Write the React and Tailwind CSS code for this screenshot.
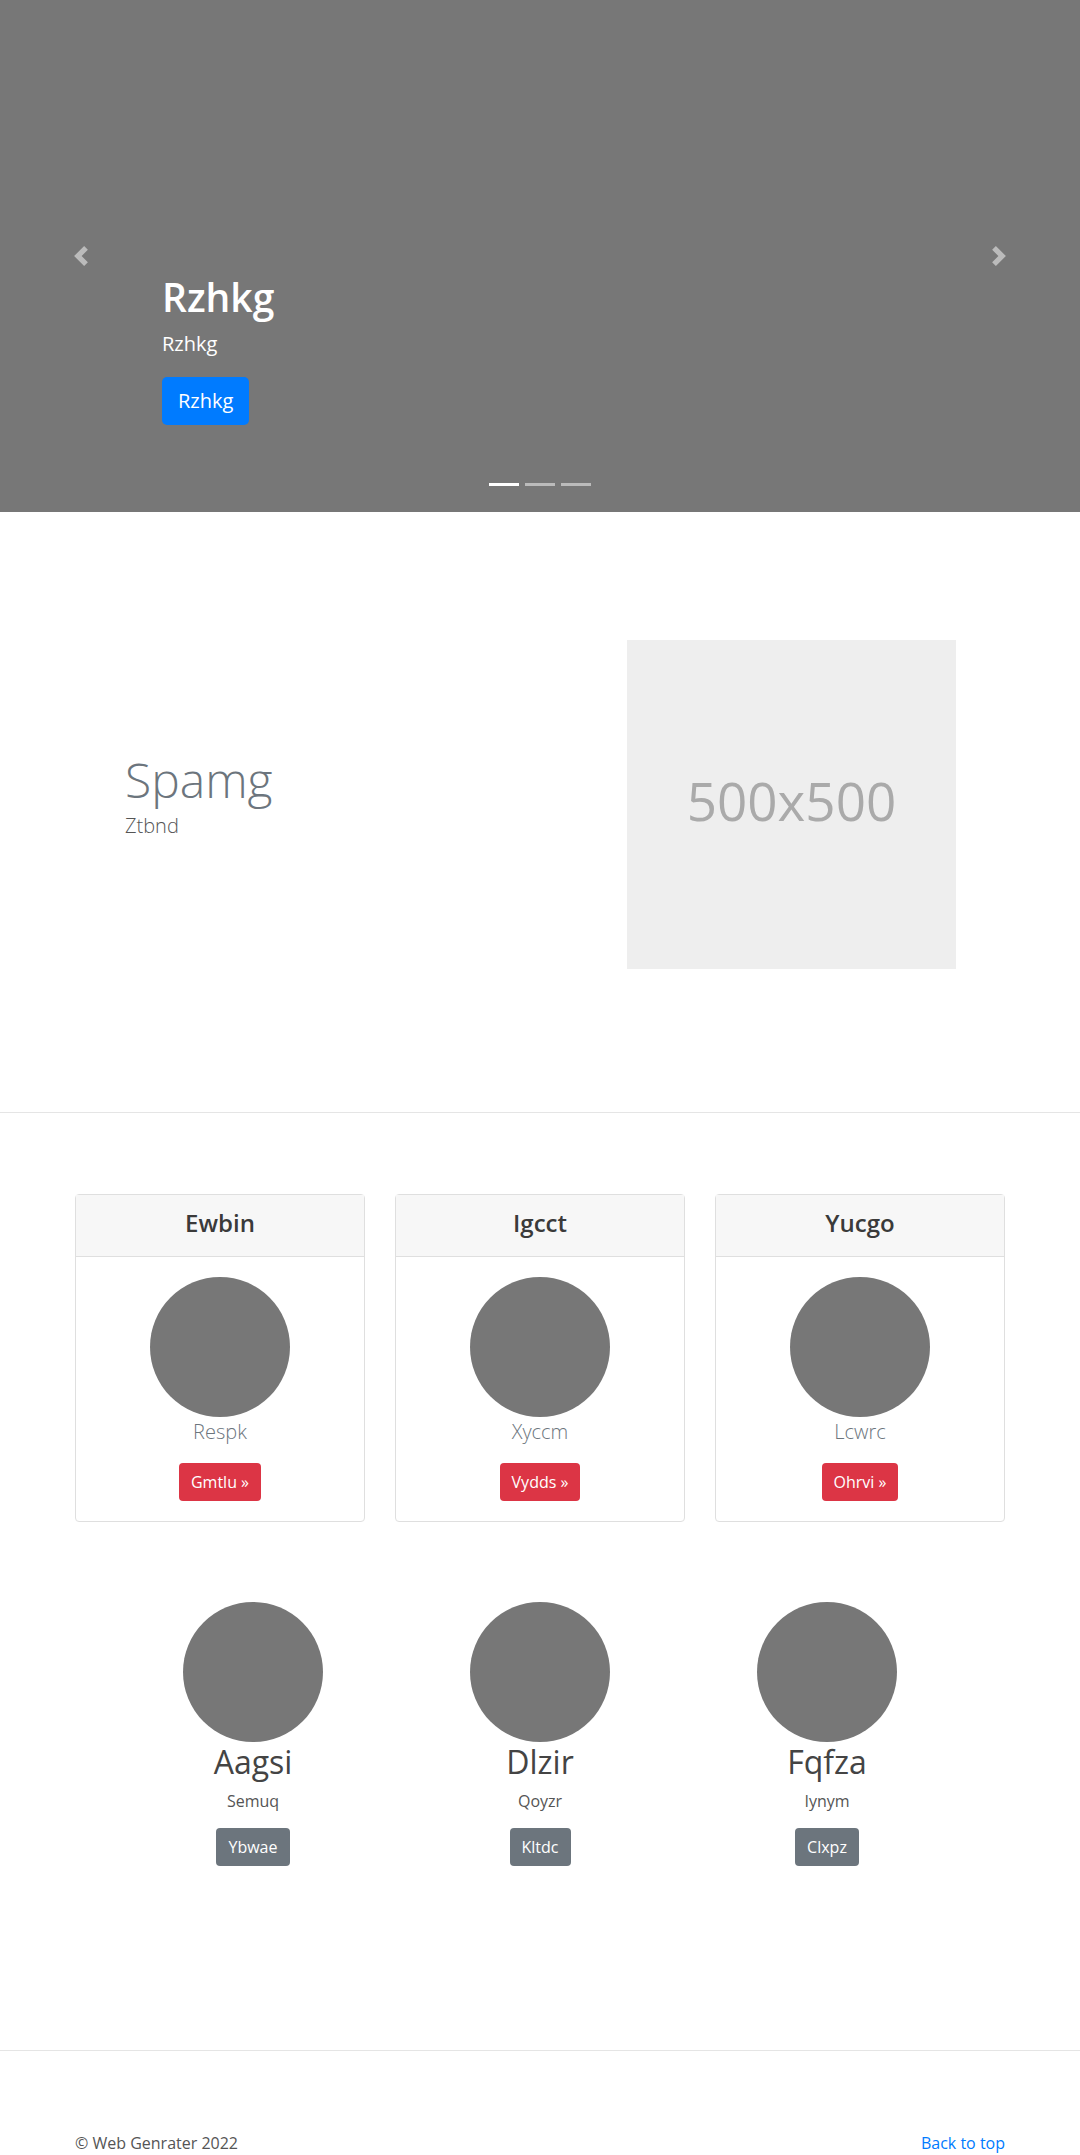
import React from 'react';

const cards = [
  { title: 'Ewbin', text: 'Respk', btn: 'Gmtlu »' },
  { title: 'Igcct', text: 'Xyccm', btn: 'Vydds »' },
  { title: 'Yucgo', text: 'Lcwrc', btn: 'Ohrvi »' },
];

const people = [
  { name: 'Aagsi', text: 'Semuq', btn: 'Ybwae' },
  { name: 'Dlzir', text: 'Qoyzr', btn: 'Kltdc' },
  { name: 'Fqfza', text: 'Iynym', btn: 'Clxpz' },
];

function Chevron({ dir }) {
  const d = dir === 'prev' ? 'M5.25 0l-4 4 4 4 1.5-1.5L4.25 4l2.5-2.5L5.25 0z' : 'M2.75 0l-1.5 1.5L3.75 4l-2.5 2.5L2.75 8l4-4-4-4z';
  return (
    <svg width="20" height="20" viewBox="0 0 8 8" className="opacity-50">
      <path fill="#fff" d={d} />
    </svg>
  );
}

export default function App() {
  return (
    <div className="w-[1080px] bg-white font-['Open_Sans','Noto_Sans',sans-serif]">
      {/* carousel */}
      <div className="relative flex h-[512px] flex-col bg-[#777] pl-[162px] pt-[273px]">
        <h1 className="mb-2 text-[39px] font-semibold leading-[48px] text-white">Rzhkg</h1>
        <p className="mb-[18px] text-[20px] leading-[30px] text-white">Rzhkg</p>
        <button className="w-fit rounded-[5px] bg-[#007bff] px-4 py-[9px] text-[20px] leading-[30px] text-white">Rzhkg</button>

        <div className="absolute left-0 top-0 flex h-full w-[162px] items-center justify-center">
          <Chevron dir="prev" />
        </div>
        <div className="absolute right-0 top-0 flex h-full w-[162px] items-center justify-center">
          <Chevron dir="next" />
        </div>
        <div className="absolute left-0 right-0 top-[483px] flex justify-center gap-[6px]">
          <span className="h-[3px] w-[30px] bg-white" />
          <span className="h-[3px] w-[30px] bg-white/50" />
          <span className="h-[3px] w-[30px] bg-white/50" />
        </div>
      </div>

      {/* featurette */}
      <div className="pb-[143px] pt-[128px]">
        <div className="mx-auto flex w-[960px] items-start px-[15px]">
          <div className="flex-1 pl-[50px] pt-[116px]">
            <h2 className="mb-[7px] text-[48px] font-light leading-none text-[#6c757d]">Spamg</h2>
            <p className="text-[20px] font-light leading-[30px] text-[#555]">Ztbnd</p>
          </div>
          <div className="mr-[49px] flex h-[329px] w-[329px] items-center justify-center bg-[#eee] pb-[8px]">
            <span className="text-[53px] leading-none text-[#aaa]">500x500</span>
          </div>
        </div>
      </div>

      <div className="border-t border-[#e5e5e5]" />

      {/* cards */}
      <div className="pt-[81px]">
        <div className="mx-auto grid w-[960px] grid-cols-3 gap-[30px] px-[15px]">
          {cards.map((c) => (
            <div key={c.title} className="rounded-[4px] border border-[#dfdfdf] text-center">
              <div className="border-b border-[#dfdfdf] bg-[#f7f7f7] pb-[19px] pt-[13px] text-[24px] font-semibold leading-[29px] text-[#3a3a3a]">
                {c.title}
              </div>
              <div className="flex flex-col items-center p-5">
                <div className="h-[140px] w-[140px] rounded-full bg-[#777]" />
                <p className="mb-4 text-[20px] font-light leading-[30px] text-[#6c757d]">{c.text}</p>
                <button className="rounded-[4px] bg-[#dc3545] px-3 py-[7px] text-[16px] leading-6 text-white">{c.btn}</button>
              </div>
            </div>
          ))}
        </div>
      </div>

      {/* marketing */}
      <div className="pb-[184px] pt-[80px]">
        <div className="mx-auto grid w-[861px] grid-cols-3">
          {people.map((p) => (
            <div key={p.name} className="flex flex-col items-center text-center">
              <div className="h-[140px] w-[140px] rounded-full bg-[#777]" />
              <h2 className="mb-2 mt-px text-[32px] leading-[38px] text-[#444]">{p.name}</h2>
              <p className="mb-[15px] text-[16px] leading-6 text-[#555]">{p.text}</p>
              <button className="rounded-[4px] bg-[#6c757d] px-3 py-[7px] text-[16px] leading-6 text-white">{p.btn}</button>
            </div>
          ))}
        </div>
      </div>

      <div className="border-t border-[#e5e5e5]" />

      {/* footer */}
      <div className="pt-[80px]">
        <div className="mx-auto flex w-[960px] justify-between px-[15px] text-[16px] leading-6">
          <p className="text-[#555]">© Web Genrater 2022</p>
          <a href="#" className="text-[#007bff]">Back to top</a>
        </div>
      </div>
    </div>
  );
}
